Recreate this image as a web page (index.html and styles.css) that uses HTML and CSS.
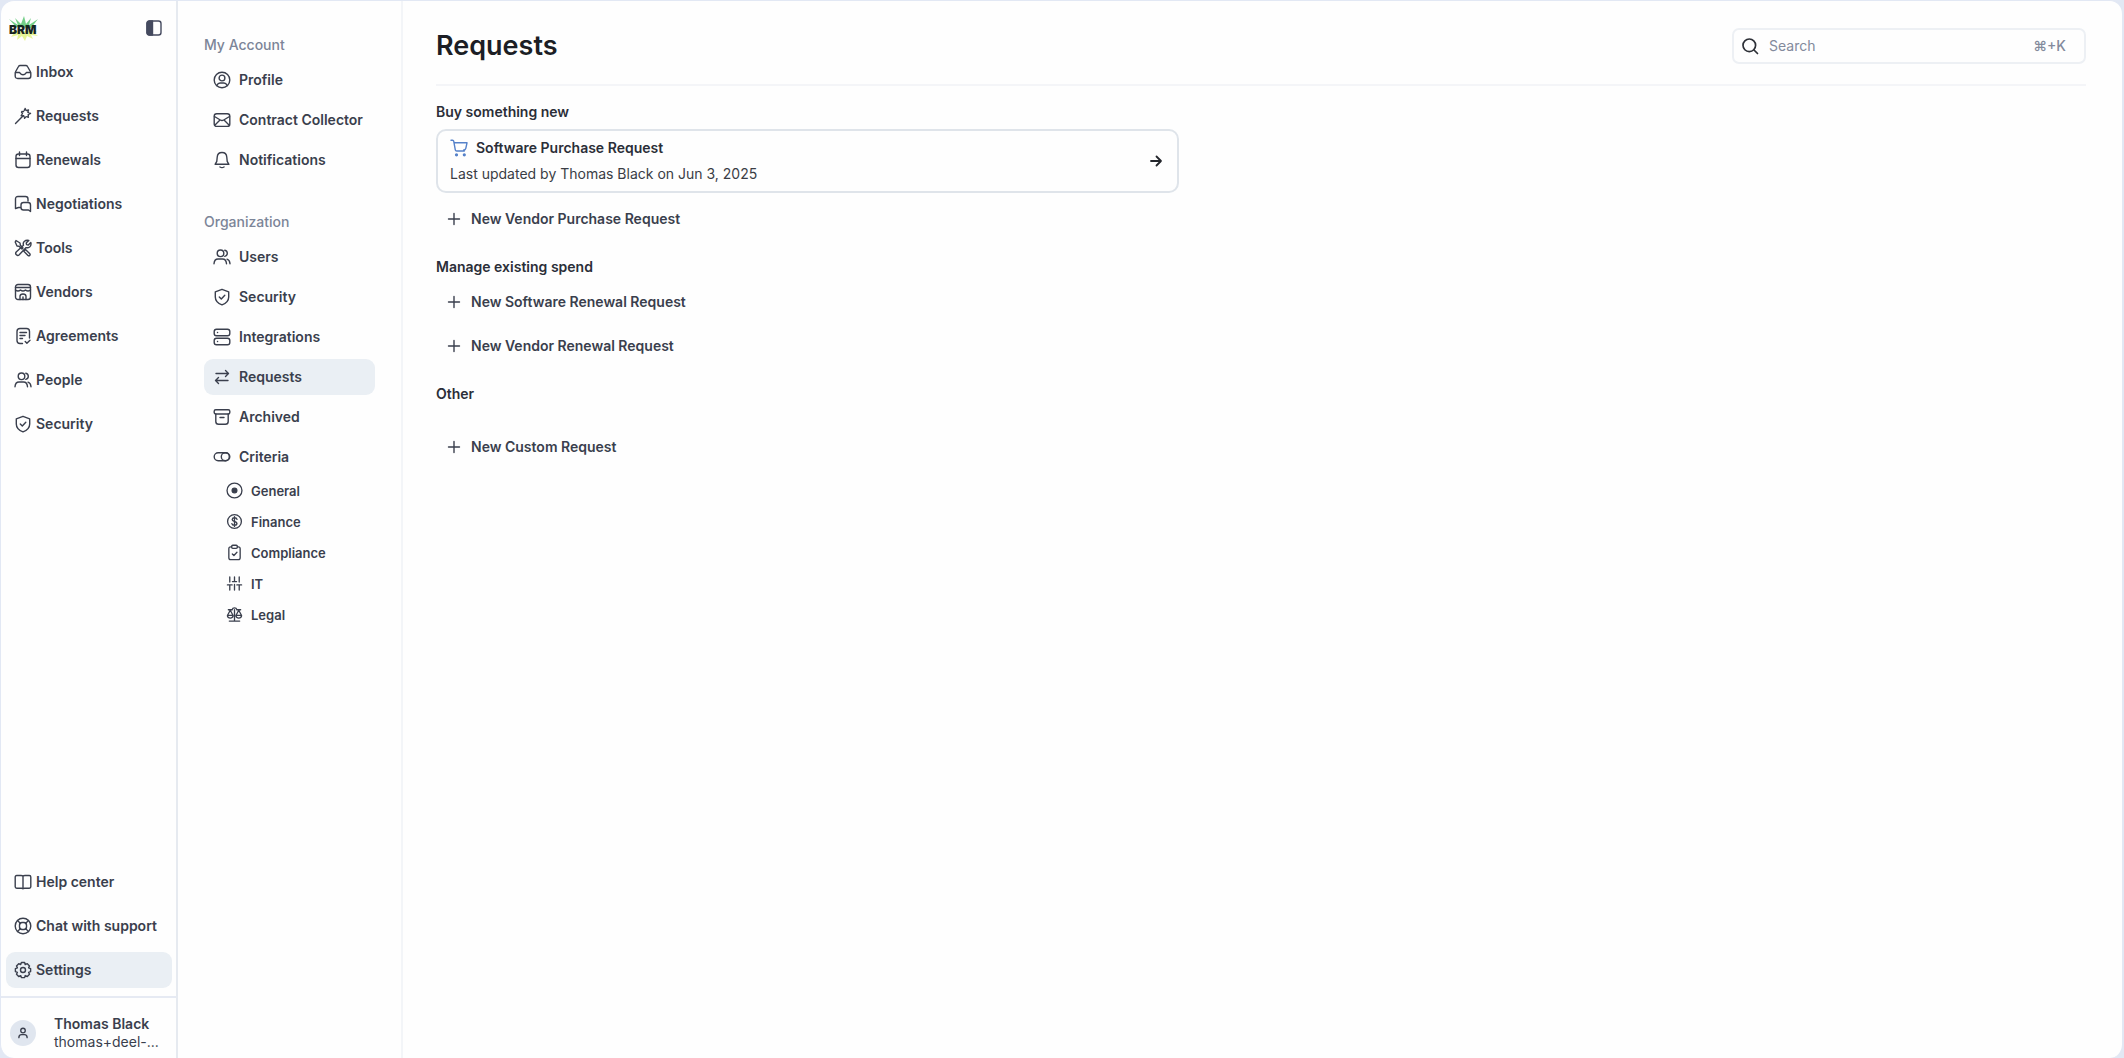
FILE: index.html
```html
<!DOCTYPE html>
<html lang="en">
<head>
<meta charset="utf-8">
<meta name="viewport" content="width=device-width, initial-scale=1">
<title>Requests</title>
<link rel="stylesheet" href="styles.css">
</head>
<body>
<svg class="sprite" aria-hidden="true">
  <symbol id="inbox" viewBox="0 0 18 18"><path d="M4.500 3.500Q5 2.500 6.200 2.500h5.600q1.200 0 1.700 1L16.300 8.500q.5 1 .5 2v2.500q0 2.500-2.500 2.500H3.700q-2.500 0-2.500-2.500v-2.500q0-1 .5-2z"/><path d="M1.500 9.500h4c.6 0 .8 2.300 3.500 2.300s2.900-2.300 3.500-2.300h4"/></symbol>
  <symbol id="wand" viewBox="0 0 18 18"><path d="M1.500 16.500 9.200 8.800"/><path d="m11.200 1.500.9 2.200 2.400-.7-.6 2.400 2.600 1.100-2.300 1.200.3 2.600-2.300-.9-1.700 1.800-.8-2.400-2.500-.1 1.300-2.100-1.300-2.100 2.400.1z" stroke-dasharray="1.800 1.300"/></symbol>
  <symbol id="calendar" viewBox="0 0 18 18"><rect x="2" y="3" width="14" height="13.500" rx="2.500"/><path d="M2 7.500h14M5.500 1v3.500M12.500 1v3.500"/></symbol>
  <symbol id="chats" viewBox="0 0 18 18"><path d="M6.500 12.500h-2l-3 1V4q0-2.500 2.500-2.500h7.500Q14 1.500 14 4v2"/><path d="M9.500 7.500H14q2.500 0 2.500 2.500v6.500l-2-1.500h-5Q7 15 7 12.500V10q0-2.500 2.500-2.500z"/></symbol>
  <symbol id="tools" viewBox="0 0 18 18"><path d="M2 1.500 6 4l.4 2.300L9 9l-1 1-2.700-2.600L3 7 1.200 3z"/><path d="m11.500 10.500 4.300 4.200q.7.900-.1 1.700t-1.700.1L9.800 12.300z"/><path d="M14.800 1.500 12.200 4l.4 1.600 1.700.4 2.500-2.600q.8 3-1.200 4.600-1.700 1.200-3.500.6L5 16q-1.200 1-2.600-.2T2.200 13l7.300-6.800Q8.700 4 10.200 2.500q2-1.700 4.600-1z"/></symbol>
  <symbol id="store" viewBox="0 0 18 18"><rect x="1.500" y="1.500" width="15" height="15" rx="2.500"/><path d="M1.500 4.500h15M1.500 7q2.500 2 5 0 2.500 2 5 0 2.500 2 5 0M6 16.500v-3.300q0-2.200 3-2.200t3 2.200v3.300M9 14v2.500"/></symbol>
  <symbol id="agreement" viewBox="0 0 18 18"><path d="M8.500 16.500H6q-3 0-3-3v-9q0-3 3-3h6.500q3 0 3 3V11"/><path d="M6 5.500h6.500M6 8.500h5M6 11.500h2.500M11.200 14.500l1.700 1.700 3.100-3"/></symbol>
  <symbol id="people" viewBox="0 0 18 18"><circle cx="7.500" cy="5.300" r="3.300"/><path d="M1 15.800q.4-4.800 4-4.800h4.500q3.600 0 4 4.800M11.800 2.200q2.500.6 2.500 3.100t-2.500 3.100M14 11.200q2.700.8 3 4.600"/></symbol>
  <symbol id="shield" viewBox="0 0 18 18"><path d="M9 1.300 15.700 3.800V9q0 5.300-6.700 7.900Q2.300 14.300 2.300 9V3.800z"/><path d="m6.300 9 2 2 3.500-3.700"/></symbol>
  <symbol id="book" viewBox="0 0 18 18"><path d="M9 3.200Q8.500 2.500 7 2.500H2.700q-1.500 0-1.500 1.500v9.800q0 1.400 1.500 1.400h4.800q1 0 1.500.6.500-.6 1.500-.6h4.800q1.500 0 1.500-1.400V4q0-1.500-1.500-1.500H11q-1.500 0-2 .7zM9 3.200v12.500"/></symbol>
  <symbol id="lifebuoy" viewBox="0 0 18 18"><circle cx="9" cy="9" r="7.800"/><rect x="5.500" y="5.500" width="7" height="7" rx="2.500"/><path d="m3.500 3.500 3 3m5 5 3 3m0-11-3 3m-5 5-3 3"/></symbol>
  <symbol id="gear" viewBox="0 0 18 18"><path d="m7.400 1.500h3.200l.6 2 2.100-.8 2.200 2.200-.9 2 2 .7v3l-2 .7.9 2-2.200 2.200-2.100-.9-.6 2H7.400l-.7-2-2 .9-2.200-2.200.9-2-2-.7v-3l2-.7-.9-2 2.200-2.200 2 .8z"/><circle cx="9" cy="9" r="2.500"/></symbol>
  <symbol id="person" viewBox="0 0 18 18"><circle cx="9" cy="5.300" r="3.400"/><path d="M2.800 16q0-4.500 4-4.500h4.400q4 0 4 4.500"/></symbol>
  <symbol id="profile" viewBox="0 0 18 18"><circle cx="9" cy="9" r="7.800"/><circle cx="9" cy="7" r="2.900"/><path d="M3.800 14.500Q5 12 7 12h4q2 0 3.200 2.500"/></symbol>
  <symbol id="mail" viewBox="0 0 18 18"><rect x="1.200" y="2.800" width="15.600" height="12.600" rx="2.500"/><path d="M1.500 5.500 7.300 9q1.700 1 3.400 0l5.800-3.500M2 14l4.500-4.500M16 14l-4.500-4.500"/></symbol>
  <symbol id="bell" viewBox="0 0 18 18"><path d="M9 1.500q4.500 0 4.800 4.700l.4 4.100 1.700 3H2.100l1.700-3 .4-4.100Q4.500 1.500 9 1.500zM7 16q2 1.300 4 0"/></symbol>
  <symbol id="server" viewBox="0 0 18 18"><rect x="1.200" y="1.200" width="15.600" height="6.600" rx="2.300"/><rect x="1.200" y="10.200" width="15.600" height="6.600" rx="2.300"/><path d="M4.500 4.500h.1M4.500 13.500h.1"/></symbol>
  <symbol id="swap" viewBox="0 0 18 18"><path d="M3 5.500h12.500m-3-3 3 3-3 3M15 12.500H2.500m3-3-3 3 3 3"/></symbol>
  <symbol id="archive" viewBox="0 0 18 18"><rect x="1.200" y="1.800" width="15.600" height="4.200" rx="1.500"/><path d="M2.800 6v7.500q0 2.800 2.800 2.800h6.800q2.800 0 2.800-2.800V6M7 9.500h4"/></symbol>
  <symbol id="toggle" viewBox="0 0 18 18"><rect x="1.200" y="4.800" width="15.600" height="8" rx="4"/><circle cx="12.300" cy="8.800" r="4"/></symbol>
  <symbol id="target" viewBox="0 0 18 18"><circle cx="9" cy="9" r="7.900"/><circle cx="9" cy="9" r="2.500" fill="currentColor"/></symbol>
  <symbol id="dollar" viewBox="0 0 18 18"><circle cx="9" cy="9" r="7.300"/><path d="M11.700 6.800Q11.200 5 9 5T6.500 7Q6.500 8.500 9 9t2.600 2Q11.500 13 9 13t-2.800-1.800M9 3.800v10.400"/></symbol>
  <symbol id="clipboard" viewBox="0 0 18 18"><path d="M6 3H5Q3 3 3 5v9.500q0 2 2 2h8q2 0 2-2V5q0-2-2-2h-1"/><rect x="6" y="1.300" width="6" height="3.400" rx="1.200"/><path d="m6.700 10.500 1.700 1.700 3.200-3.400"/></symbol>
  <symbol id="sliders" viewBox="0 0 18 18"><path d="M4 2v5.500M1.500 10.500h5M4 10.500V16M9 2v4.500M6.800 7h4.400M9 10v6M14 2v5.500M11.500 10.500h5M14 10.500V16"/></symbol>
  <symbol id="scales" viewBox="0 0 18 18"><path d="M2.500 4h4Q7 2 9 2t2.500 2h4M9 4v12M3.500 16h11M4.500 4.500 1.500 10h6zM13.500 4.500l-3 5.500h6zM1.500 10.500q.5 2.300 3 2.300t3-2.300M10.500 10.500q.5 2.300 3 2.300t3-2.300"/></symbol>
  <symbol id="plus" viewBox="0 0 18 18"><path d="M9 3.500v11M3.500 9h11"/></symbol>
  <symbol id="arrow" viewBox="0 0 18 18"><path d="M4 9h10M9.500 4.500 14 9l-4.500 4.500"/></symbol>
  <symbol id="cart" viewBox="0 0 18 18"><path d="M1 1.200h1.500q1 0 1.200 1l1.600 8.600q.2 1.200 1.400 1.200h7.600M4 3.800h13l-1.200 5.500q-.4 1.700-2.100 1.700"/><circle cx="6.500" cy="15.800" r=".9" fill="currentColor"/><circle cx="14.300" cy="15.800" r=".9" fill="currentColor"/></symbol>
  <symbol id="search" viewBox="0 0 18 18"><circle cx="8.300" cy="8.300" r="6.300"/><path d="m13 13 3.500 3.500"/></symbol>
  <symbol id="panel" viewBox="0 0 18 18"><rect x="2" y="2" width="14" height="14" rx="2.500"/><path d="M4 2h3.500v14H4l-2-2V4z" fill="currentColor"/></symbol>
</svg>
<div class="app">
  <aside class="sidebar">
    <div class="brand">
      <a class="logo" href="#" aria-label="BRM">
        <svg viewBox="0 0 32 28" aria-hidden="true">
          <path fill="#74cf88" d="M8 13 1 5l9 6-3-7 6 6 3-8 2 8 5-6-2 7 9-6-7 9z"/>
          <path fill="#e6f596" d="M3 17h26l-3 2 4 3-7-1 2 4-6-3-2 5-3-5-5 4 1-5-7 2 3-4z"/>
          <text class="logo-text" x="1" y="20">BRM</text>
        </svg>
      </a>
      <button class="collapse" type="button" aria-label="Collapse sidebar"><svg class="icon"><use href="#panel"/></svg></button>
    </div>
    <nav class="nav" aria-label="Main">
      <a href="#"><svg class="icon"><use href="#inbox"/></svg>Inbox</a>
      <a href="#"><svg class="icon"><use href="#wand"/></svg>Requests</a>
      <a href="#"><svg class="icon"><use href="#calendar"/></svg>Renewals</a>
      <a href="#"><svg class="icon"><use href="#chats"/></svg>Negotiations</a>
      <a href="#"><svg class="icon"><use href="#tools"/></svg>Tools</a>
      <a href="#"><svg class="icon"><use href="#store"/></svg>Vendors</a>
      <a href="#"><svg class="icon"><use href="#agreement"/></svg>Agreements</a>
      <a href="#"><svg class="icon"><use href="#people"/></svg>People</a>
      <a href="#"><svg class="icon"><use href="#shield"/></svg>Security</a>
    </nav>
    <nav class="nav nav-bottom" aria-label="Support">
      <a href="#"><svg class="icon"><use href="#book"/></svg>Help center</a>
      <a href="#"><svg class="icon"><use href="#lifebuoy"/></svg>Chat with support</a>
      <a class="active" href="#"><svg class="icon"><use href="#gear"/></svg>Settings</a>
    </nav>
    <div class="user">
      <span class="avatar"><svg class="icon icon-xs"><use href="#person"/></svg></span>
      <div class="user-text"><strong>Thomas Black</strong><span>thomas+deel-...</span></div>
    </div>
  </aside>
  <nav class="settings" aria-label="Settings">
    <h2>My Account</h2>
    <div class="settings-list">
      <a href="#"><svg class="icon"><use href="#profile"/></svg>Profile</a>
      <a href="#"><svg class="icon"><use href="#mail"/></svg>Contract Collector</a>
      <a href="#"><svg class="icon"><use href="#bell"/></svg>Notifications</a>
    </div>
    <h2>Organization</h2>
    <div class="settings-list">
      <a href="#"><svg class="icon"><use href="#people"/></svg>Users</a>
      <a href="#"><svg class="icon"><use href="#shield"/></svg>Security</a>
      <a href="#"><svg class="icon"><use href="#server"/></svg>Integrations</a>
      <a class="active" href="#"><svg class="icon"><use href="#swap"/></svg>Requests</a>
      <a href="#"><svg class="icon"><use href="#archive"/></svg>Archived</a>
      <a href="#"><svg class="icon"><use href="#toggle"/></svg>Criteria</a>
    </div>
    <div class="criteria">
      <a href="#"><svg class="icon"><use href="#target"/></svg>General</a>
      <a href="#"><svg class="icon"><use href="#dollar"/></svg>Finance</a>
      <a href="#"><svg class="icon"><use href="#clipboard"/></svg>Compliance</a>
      <a href="#"><svg class="icon"><use href="#sliders"/></svg>IT</a>
      <a href="#"><svg class="icon"><use href="#scales"/></svg>Legal</a>
    </div>
  </nav>
  <main class="main">
    <header class="header">
      <h1>Requests</h1>
      <label class="search">
        <svg class="icon"><use href="#search"/></svg>
        <input type="search" placeholder="Search" aria-label="Search">
        <kbd>⌘+K</kbd>
      </label>
    </header>
    <section class="group">
      <h2>Buy something new</h2>
      <a class="card" href="#">
        <span class="card-body">
          <span class="card-title"><svg class="icon cart"><use href="#cart"/></svg>Software Purchase Request</span>
          <span>Last updated by Thomas Black on Jun 3, 2025</span>
        </span>
        <svg class="icon arrow"><use href="#arrow"/></svg>
      </a>
      <button class="add" type="button"><svg class="icon"><use href="#plus"/></svg>New Vendor Purchase Request</button>
    </section>
    <section class="group">
      <h2>Manage existing spend</h2>
      <button class="add" type="button"><svg class="icon"><use href="#plus"/></svg>New Software Renewal Request</button>
      <button class="add" type="button"><svg class="icon"><use href="#plus"/></svg>New Vendor Renewal Request</button>
    </section>
    <section class="group group-spaced">
      <h2>Other</h2>
      <button class="add" type="button"><svg class="icon"><use href="#plus"/></svg>New Custom Request</button>
    </section>
  </main>
</div>
</body>
</html>
```
FILE: styles.css
```css
* { box-sizing: border-box; }

body {
  margin: 0;
  background: #e2e8f4;
  color: #3a3f4d;
  font: 500 14px/20px Inter, "Liberation Sans", sans-serif;
}

h1, h2 { margin: 0; }
a { color: inherit; text-decoration: none; }
button { border: 0; background: none; color: inherit; font: inherit; cursor: pointer; }

.sprite { display: none; }

.icon {
  flex: none;
  width: 18px;
  height: 18px;
  fill: none;
  stroke: currentColor;
  stroke-width: 1.4;
  stroke-linecap: round;
  stroke-linejoin: round;
}

.icon-xs { width: 12px; height: 12px; stroke-width: 2; }

.app {
  display: flex;
  min-height: 100vh;
  border: solid #e2e8f4;
  border-width: 1px 2px 0 1px;
  border-radius: 14px;
  background: #fefefe;
}

/* Primary sidebar */
.sidebar {
  display: flex;
  flex: none;
  flex-direction: column;
  width: 177px;
  border-right: 2px solid #e6eaf0;
}

.brand {
  display: flex;
  align-items: center;
  justify-content: space-between;
  height: 53px;
  padding: 0 12px 0 7px;
}

.logo svg { display: block; width: 32px; height: 28px; }
.logo-text { fill: #17251f; font-size: 12px; font-weight: 900; }
.collapse { display: flex; padding: 1px; color: #454a5f; }

.nav {
  display: flex;
  flex-direction: column;
  gap: 8px;
  padding: 0 4px 0 5px;
}

.nav a, .settings a {
  display: flex;
  align-items: center;
  gap: 4px;
  height: 36px;
  padding: 0 8px;
  border-radius: 9px;
  font-weight: 600;
  white-space: nowrap;
}

.nav .active, .settings .active { background: #eaeff4; }
.nav-bottom { margin-top: auto; padding-bottom: 8px; }

.user {
  display: flex;
  align-items: center;
  gap: 18px;
  height: 62px;
  padding: 10px 8px 0 9px;
  border-top: 2px solid #e6eaf3;
}

.avatar {
  display: grid;
  flex: none;
  place-items: center;
  width: 26px;
  height: 26px;
  border-radius: 50%;
  background: #e0e6ef;
}

.user-text { display: grid; line-height: 18px; white-space: nowrap; }
.user-text strong { font-weight: 600; }
.user-text span { font-weight: 400; }

/* Settings navigation */
.settings {
  flex: none;
  width: 225px;
  padding: 34px 26px 0;
  border-right: 2px solid #f3f5f8;
}

.settings h2 { color: #7c8598; font-size: 14px; font-weight: 500; line-height: 20px; }
.settings-list { display: grid; gap: 4px; padding: 7px 0 34px; }
.settings-list a { gap: 8px; padding: 0 9px; }
.settings-list:nth-last-child(2) { padding-bottom: 0; }

.criteria { display: grid; padding-left: 13px; }
.criteria a { gap: 8px; height: 31px; padding: 0 9px; font-size: 13px; }
.criteria .icon { width: 17px; height: 17px; }

/* Content */
.main { flex: 1; min-width: 0; padding: 0 36px 0 33px; }

.header {
  display: flex;
  align-items: center;
  justify-content: space-between;
  height: 85px;
  padding-top: 6px;
  border-bottom: 2px solid #f4f5f8;
}

h1 { color: #1c1e25; font-size: 27px; font-weight: 600; line-height: 32px; }

.search {
  display: flex;
  align-items: center;
  gap: 10px;
  width: 354px;
  height: 36px;
  padding: 0 18px 0 7px;
  border: 2px solid #edf0f4;
  border-radius: 7px;
  color: #2d3037;
}

.search .icon { stroke-width: 1.7; }

.search input {
  flex: 1;
  min-width: 0;
  padding: 0;
  border: 0;
  outline: 0;
  background: none;
  color: inherit;
  font: 400 14px/20px Inter, "Liberation Sans", sans-serif;
}

.search input::placeholder { color: #838a9c; opacity: 1; }
.search kbd { color: #838a9c; font: 500 14px/20px Inter, "DejaVu Sans", sans-serif; }

.group { display: flex; flex-direction: column; align-items: flex-start; gap: 8px; padding-top: 17px; }
.group + .group { padding-top: 21px; }
.group h2 { color: #2b2e38; font-size: 14px; font-weight: 600; line-height: 18px; }

.card {
  display: flex;
  align-items: center;
  justify-content: space-between;
  width: 45%;
  padding: 6px 12px;
  border: 2px solid #dfe4ea;
  border-radius: 10px;
  color: #3a3d45;
}

.card-body { display: grid; gap: 4px; font-weight: 400; line-height: 22px; }
.card-title { display: flex; align-items: center; gap: 8px; color: #2b2e38; font-weight: 600; }
.cart { color: #5581c9; }
.arrow { color: #24262c; stroke-width: 1.8; }

.add {
  display: flex;
  align-items: center;
  gap: 8px;
  height: 36px;
  padding: 0 9px;
  font-weight: 600;
}

.group + .group-spaced { gap: 26px; }
```
